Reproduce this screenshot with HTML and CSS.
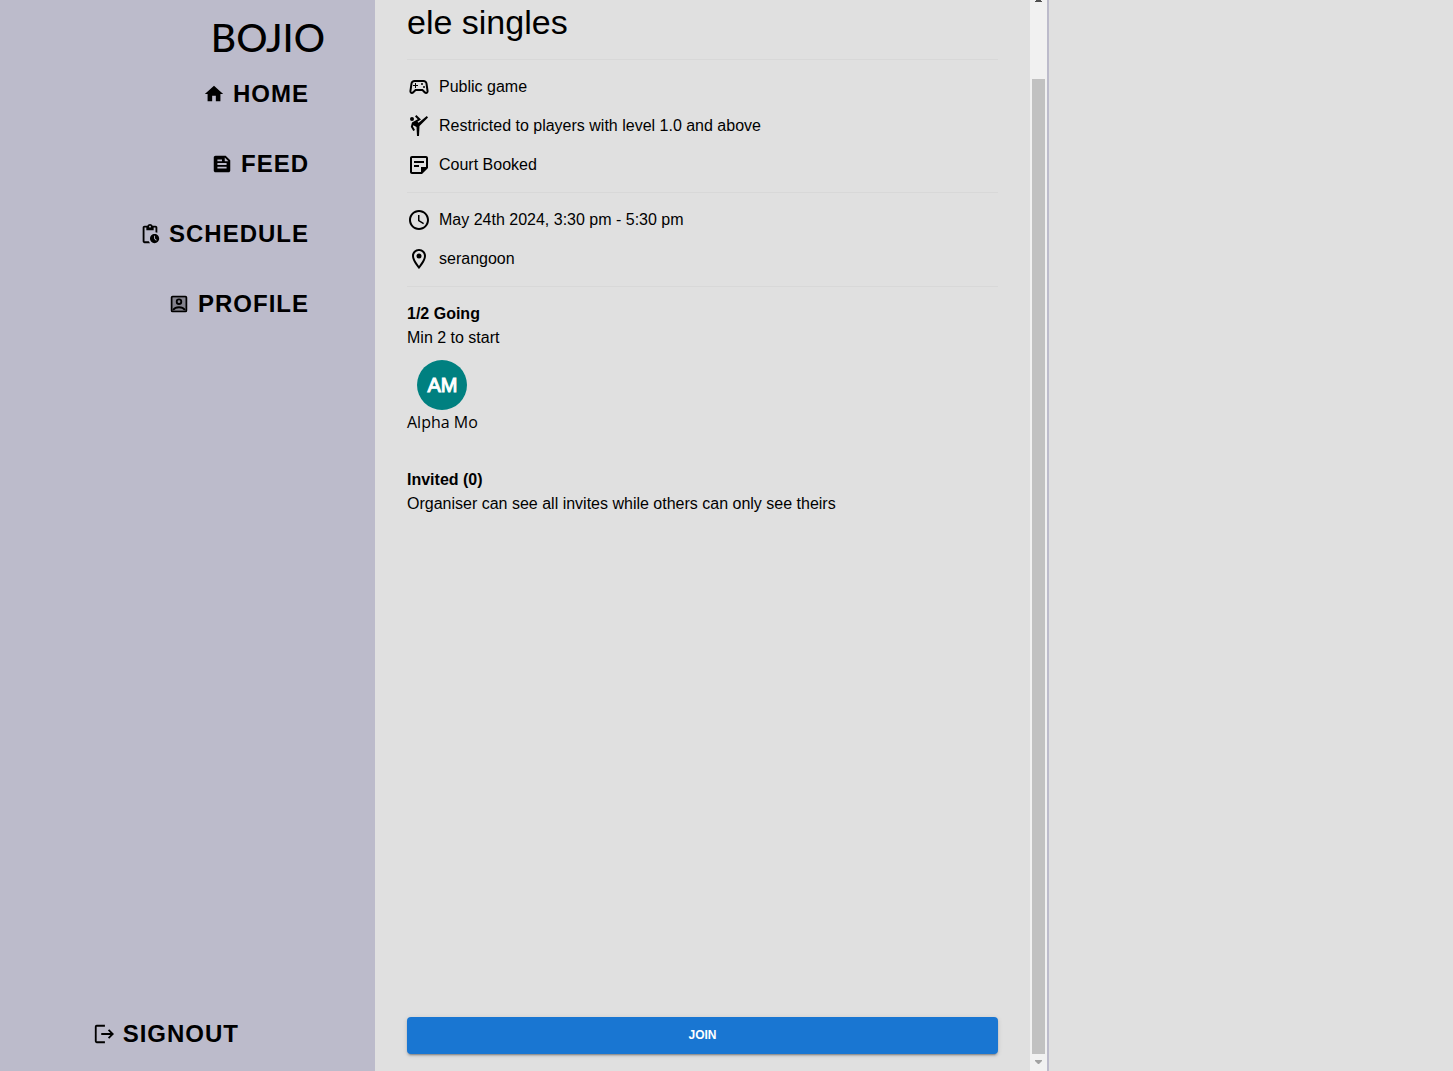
FILE: index.html
```html
<!DOCTYPE html>
<html lang="en">
<head>
<meta charset="utf-8">
<meta name="viewport" content="width=device-width, initial-scale=1">
<title>Bojio</title>
<link rel="stylesheet" href="styles.css">
</head>
<body>
<div class="layout">
  <header class="sidebar">
    <div class="brand">BOJIO</div>
    <nav class="menu">
      <a class="menu-link" href="#home">
        <svg class="menu-icon" viewBox="0 0 24 24" aria-hidden="true"><path d="M10 20v-6h4v6h5v-8h3L12 3 2 12h3v8z"/></svg>
        <span>HOME</span>
      </a>
      <a class="menu-link" href="#feed">
        <svg class="menu-icon" viewBox="0 0 24 24" aria-hidden="true"><path d="M16 3H5c-1.1 0-2 .9-2 2v14c0 1.1.9 2 2 2h14c1.1 0 2-.9 2-2V8l-5-5zM7 7h5v2H7V7zm10 10H7v-2h10v2zm0-4H7v-2h10v2zm-2-4V5l4 4h-4z"/></svg>
        <span>FEED</span>
      </a>
      <a class="menu-link" href="#schedule">
        <svg class="menu-icon" viewBox="0 0 24 24" aria-hidden="true"><path d="M17 12c-2.76 0-5 2.24-5 5s2.24 5 5 5 5-2.24 5-5-2.24-5-5-5zm1.65 7.35L16.5 17.2V14h1v2.79l1.85 1.85-.7.71zM18 3h-3.18C14.4 1.84 13.3 1 12 1s-2.4.84-2.82 2H6c-1.1 0-2 .9-2 2v15c0 1.1.9 2 2 2h6.11c-.59-.57-1.07-1.25-1.42-2H6V5h2v3h8V5h2v5.08c.71.1 1.38.31 2 .6V5c0-1.1-.9-2-2-2zm-6 2c-.55 0-1-.45-1-1s.45-1 1-1 1 .45 1 1-.45 1-1 1z"/></svg>
        <span>SCHEDULE</span>
      </a>
      <a class="menu-link" href="#profile">
        <svg class="menu-icon" viewBox="0 0 24 24" aria-hidden="true">
          <path opacity=".3" d="M5 5h14v14H5z"/>
          <g fill="none" stroke="currentColor" stroke-width="2"><rect x="4" y="4" width="16" height="16" rx="1"/><circle cx="12" cy="9.5" r="2.5"/><path d="M5.5 18.5C7 16.5 9.3 15.5 12 15.5s5 1 6.5 3"/></g>
        </svg>
        <span>PROFILE</span>
      </a>
    </nav>
    <button class="signout" type="button">
      <svg class="menu-icon" viewBox="0 0 24 24" aria-hidden="true"><path fill="none" stroke="currentColor" stroke-width="2" d="M13 3H4Q3 3 3 4v16q0 1 1 1h9M9 12h12M17 7.5l4.500 4.500-4.500 4.500"/></svg>
      <span>SIGNOUT</span>
    </button>
  </header>

  <div class="panel">
    <main class="game">
      <h1 class="title">ele singles</h1>
      <ul class="facts">
        <li class="fact">
          <svg class="fact-icon" viewBox="0 0 24 24" aria-hidden="true"><path d="M21.58 16.09l-1.09-7.66C20.21 6.46 18.52 5 16.53 5H7.47C5.48 5 3.79 6.46 3.51 8.43l-1.09 7.66C2.2 17.63 3.39 19 4.94 19c.68 0 1.32-.27 1.8-.75L9 16h6l2.25 2.25c.48.48 1.13.75 1.8.75 1.56 0 2.75-1.37 2.53-2.91zm-2.1.72c-.08.09-.21.19-.42.19-.15 0-.29-.06-.39-.16L15.83 14H8.17l-2.84 2.84c-.1.1-.24.16-.39.16-.21 0-.34-.1-.42-.19-.08-.09-.16-.23-.13-.44l1.09-7.66C5.63 7.74 6.48 7 7.47 7h9.06c.99 0 1.84.74 1.98 1.72l1.09 7.66c.03.2-.05.34-.12.43z"/><path d="M9 8H8v2H6v1h2v2h1v-2h2v-1H9z"/><circle cx="17" cy="12" r="1"/><circle cx="15" cy="9" r="1"/></svg>
          <span>Public game</span>
        </li>
        <li class="fact">
          <svg class="fact-icon" viewBox="0 0 24 24" aria-hidden="true"><path d="M19.8 2l-8.2 6.7-1.21-1.04 3.6-2.08L9.41 1 8 2.41l2.74 2.74L5 8.46l-1.19 4.29L6.27 17 8 16l-2.03-3.52.35-1.3L9.5 13l.5 9h2l.5-10L21 3.4z"/><circle cx="5" cy="5" r="2"/></svg>
          <span>Restricted to players with level 1.0 and above</span>
        </li>
        <li class="fact">
          <svg class="fact-icon" viewBox="0 0 24 24" aria-hidden="true"><path d="M19 5v9h-5v5H5V5h14m0-2H5c-1.1 0-2 .9-2 2v14c0 1.1.9 2 2 2h10l6-6V5c0-1.1-.9-2-2-2zm-7 11H7v-2h5v2zm5-4H7V8h10v2z"/></svg>
          <span>Court Booked</span>
        </li>
      </ul>
      <ul class="facts">
        <li class="fact">
          <svg class="fact-icon" viewBox="0 0 24 24" aria-hidden="true"><path d="M11.99 2C6.47 2 2 6.48 2 12s4.47 10 9.99 10C17.52 22 22 17.52 22 12S17.52 2 11.99 2zM12 20c-4.42 0-8-3.58-8-8s3.58-8 8-8 8 3.58 8 8-3.58 8-8 8zm.5-13H11v6l5.25 3.15.75-1.23-4.5-2.67z"/></svg>
          <span>May 24th 2024, 3:30 pm - 5:30 pm</span>
        </li>
        <li class="fact">
          <svg class="fact-icon" viewBox="0 0 24 24" aria-hidden="true"><path d="M12 2C8.13 2 5 5.13 5 9c0 5.25 7 13 7 13s7-7.75 7-13c0-3.87-3.13-7-7-7zM7 9c0-2.76 2.24-5 5-5s5 2.24 5 5c0 2.88-2.88 7.19-5 9.88C9.92 16.21 7 11.85 7 9z"/><circle cx="12" cy="9" r="2.5"/></svg>
          <span>serangoon</span>
        </li>
      </ul>
      <section class="people">
        <h2 class="subtitle">1/2 Going</h2>
        <p class="note">Min 2 to start</p>
        <div class="player">
          <span class="avatar">AM</span>
          <span class="player-name">Alpha Mo</span>
        </div>
        <h2 class="subtitle">Invited (0)</h2>
        <p class="note">Organiser can see all invites while others can only see theirs</p>
      </section>
      <button class="join" type="button">JOIN</button>
    </main>
    <div class="scrollbar" aria-hidden="true">
      <svg class="scroll-up" viewBox="0 0 17 2"><path fill="#505050" d="M6 0h5v1h1v1H5V1h1z"/></svg>
      <div class="thumb"></div>
      <svg class="scroll-down" viewBox="0 0 17 17"><path fill="#a3a3a3" d="M5 6h7v1l-3 3H8L5 7z"/></svg>
    </div>
  </div>
</div>
</body>
</html>
```
FILE: styles.css
```css
* {
  box-sizing: border-box;
}

body {
  margin: 0;
  background: #e0e0e0;
  color: #000;
  font: 16px/24px "Liberation Sans", Arial, sans-serif;
}

h1, h2, p, ul {
  margin: 0;
  padding: 0;
}

svg {
  fill: currentColor;
}

.layout {
  display: grid;
  grid-template-columns: 375fr 674fr 404fr;
  min-height: 100vh;
}

.sidebar {
  display: flex;
  flex-direction: column;
  align-items: flex-end;
  padding: 8px 50px 12px 0;
  background: #bcbbcb;
}

.brand {
  font: 500 39px/58px Lato, "Open Sans", sans-serif;
}

.menu {
  display: flex;
  flex-direction: column;
  align-items: flex-end;
  gap: 20px;
  padding: 3px 16px 0 0;
}

.menu-link,
.signout {
  display: flex;
  align-items: center;
  gap: 8px;
  height: 50px;
  color: #000;
  font: bold 24px/42px "Liberation Sans", Arial, sans-serif;
  letter-spacing: 1px;
  text-decoration: none;
}

.signout {
  margin: auto 86px 0 0;
  padding: 0;
  border: 0;
  background: none;
}

.menu-icon {
  width: 22px;
  height: 22px;
}

.panel {
  display: flex;
  border-right: 2px solid #bcbbcb;
}

.game {
  display: flex;
  flex: 1;
  flex-direction: column;
  padding: 1px 32px 17px;
}

.title {
  padding-bottom: 16px;
  font-size: 34px;
  font-weight: normal;
  line-height: 42px;
}

.facts {
  display: flex;
  flex-direction: column;
  gap: 15px;
  padding: 15px 0;
  border-top: 1px solid #d8d8d8;
  list-style: none;
}

.fact {
  display: flex;
  gap: 8px;
}

.fact-icon {
  width: 24px;
  height: 24px;
}

.people {
  padding-top: 15px;
  border-top: 1px solid #d8d8d8;
}

.subtitle {
  font-size: 16px;
}

.player {
  display: inline-flex;
  flex-direction: column;
  align-items: center;
  padding: 10px 0 34px;
}

.avatar {
  width: 50px;
  height: 50px;
  border-radius: 50%;
  background: #008080;
  color: #fff;
  font-size: 20px;
  line-height: 50px;
  text-align: center;
  -webkit-text-stroke: 1px #fff;
}

.player-name {
  font-family: "Open Sans", "Noto Sans", sans-serif;
  font-size: 16px;
}

.join {
  height: 37px;
  margin-top: auto;
  padding: 0 0 2px;
  border: 0;
  border-radius: 4px;
  background: #1976d2;
  box-shadow: 0 3px 1px -2px rgba(0, 0, 0, .2), 0 2px 2px rgba(0, 0, 0, .14), 0 1px 5px rgba(0, 0, 0, .12);
  color: #fff;
  font: bold 12px/24px "Liberation Sans", Arial, sans-serif;
}

.scrollbar {
  display: flex;
  flex-direction: column;
  width: 17px;
  background: #f1f1f1;
}

.scroll-up {
  height: 2px;
}

.thumb {
  flex: 1;
  margin: 77px 2px 0;
  background: #c1c1c1;
}

.scroll-down {
  height: 17px;
}
```
